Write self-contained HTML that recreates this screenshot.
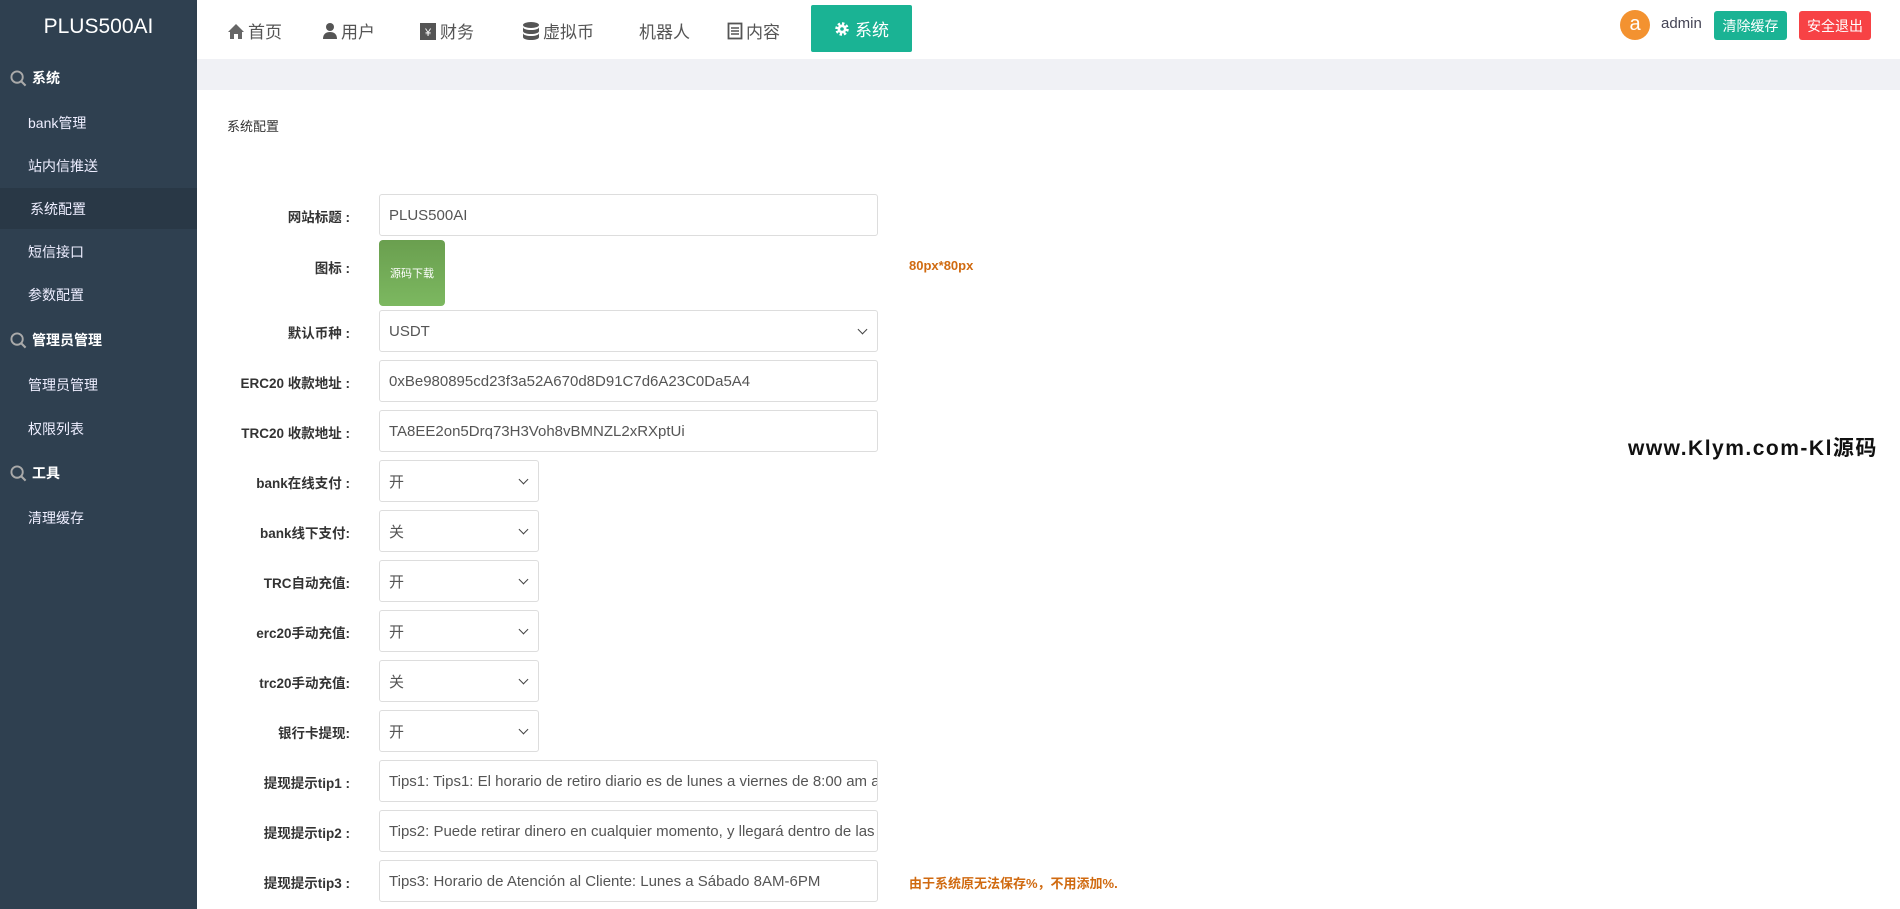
<!DOCTYPE html>
<html><head><meta charset="utf-8"><style>
*{margin:0;padding:0;box-sizing:border-box}
body{width:1900px;height:909px;overflow:hidden;background:#fff;font-family:"Liberation Sans","Noto Sans CJK SC",sans-serif;position:relative}
.side{position:absolute;left:0;top:0;width:197px;height:909px;background:#2f4050;color:#fff}
.logo{position:absolute;left:0;width:197px;top:15px;text-align:center;font-size:21px;color:#fff}
.sh{position:absolute;left:10px;font-size:14px;font-weight:bold;display:flex;align-items:center;gap:5px}
.si{position:absolute;left:28px;font-size:14px;color:#eef}
.act{position:absolute;left:0;top:188px;width:197px;height:41px;background:#293846}
.top{position:absolute;left:197px;top:0;right:0;height:59px;background:#fff;box-shadow:0 2px 4px rgba(0,0,0,.08)}
.gray{position:absolute;left:197px;top:59px;right:0;height:31px;background:#f0f1f5}
.nav{position:absolute;top:18px;font-size:17px;color:#555;display:flex;align-items:center;gap:3px}
.sys{position:absolute;left:811px;top:5px;width:101px;height:47px;background:#1ab394;border-radius:2px;color:#fff;font-size:17px;display:flex;align-items:center;justify-content:center;gap:5px}
.btn{position:absolute;top:11px;height:29px;border-radius:3px;color:#fff;font-size:14px;display:flex;align-items:center;justify-content:center}
.lbl{position:absolute;right:1550px;font-size:13.5px;font-weight:bold;color:#333;text-align:right;white-space:nowrap}
.in{position:absolute;left:379px;width:499px;height:42px;border:1px solid #ddd;border-radius:3px;font-size:15px;color:#555;padding-left:9px;display:flex;align-items:center;white-space:nowrap;overflow:hidden}
.sm{width:160px}
.sel::after{content:"";position:absolute;right:11px;top:15px;width:6px;height:6px;border-right:1.6px solid #444;border-bottom:1.6px solid #444;transform:rotate(45deg)}
.note{position:absolute;left:909px;font-size:13px;font-weight:bold;color:#d06a10}
</style></head><body>
<div class="side">
<div class="logo">PLUS500AI</div>
<div class="act"></div>
<svg width="0" height="0" style="position:absolute"><symbol id="mg" viewBox="0 0 18 18"><circle cx="7.5" cy="7.5" r="6" fill="none" stroke="#aaa" stroke-width="2"/><path d="M12 12l4.5 4.5" stroke="#aaa" stroke-width="2.2"/></symbol></svg>
<div class="sh" style="top:68px"><svg width="17" height="17"><use href="#mg"/></svg>系统</div>
<div class="si" style="top:113px">bank管理</div>
<div class="si" style="top:156px">站内信推送</div>
<div class="si" style="top:199px;left:30px">系统配置</div>
<div class="si" style="top:242px">短信接口</div>
<div class="si" style="top:285px">参数配置</div>
<div class="sh" style="top:330px"><svg width="17" height="17"><use href="#mg"/></svg>管理员管理</div>
<div class="si" style="top:375px">管理员管理</div>
<div class="si" style="top:419px">权限列表</div>
<div class="sh" style="top:463px"><svg width="17" height="17"><use href="#mg"/></svg>工具</div>
<div class="si" style="top:508px">清理缓存</div>
</div>
<div class="top"></div>
<div class="gray"></div>
<div class="nav" style="left:227px"><svg width="18" height="18" viewBox="0 0 18 18"><path d="M9 2L1 10h2v7h4v-5h4v5h4v-7h2z" fill="#666"/></svg>首页</div>
<div class="nav" style="left:322px"><svg width="16" height="18" viewBox="0 0 16 18"><circle cx="8" cy="5" r="4" fill="#555"/><path d="M1 17c0-5 3-7 7-7s7 2 7 7z" fill="#555"/></svg>用户</div>
<div class="nav" style="left:419px"><svg width="18" height="20" viewBox="0 0 18 20"><rect x="1" y="2" width="16" height="17" fill="#555"/><text x="9" y="15" font-size="11" fill="#fff" text-anchor="middle">¥</text></svg>财务</div>
<div class="nav" style="left:522px"><svg width="18" height="20" viewBox="0 0 18 20"><ellipse cx="9" cy="4" rx="8" ry="3" fill="#555"/><path d="M1 6c0 4 16 4 16 0v4c0 4-16 4-16 0zM1 12c0 4 16 4 16 0v4c0 4-16 4-16 0z" fill="#555"/></svg>虚拟币</div>
<div class="nav" style="left:639px">机器人</div>
<div class="nav" style="left:727px"><svg width="16" height="18" viewBox="0 0 16 18"><rect x="1.5" y="1.5" width="13" height="15" fill="none" stroke="#555" stroke-width="1.8"/><path d="M4 6h8M4 9h8M4 12h8" stroke="#555" stroke-width="1.5"/></svg>内容</div>
<div class="sys"><svg width="16" height="16" viewBox="0 0 16 16"><circle cx="8" cy="8" r="5" fill="none" stroke="#fff" stroke-width="3.5" stroke-dasharray="2.2 1.7"/><circle cx="8" cy="8" r="4.5" fill="#fff"/><circle cx="8" cy="8" r="1.8" fill="#1ab394"/></svg>系统</div>
<div style="position:absolute;left:1620px;top:10px;width:30px;height:30px;border-radius:50%;background:#f39230;color:#fff;font-size:20px;text-align:center;line-height:28px">a</div>
<div style="position:absolute;left:1661px;top:15px;font-size:15px;color:#445">admin</div>
<div class="btn" style="left:1714px;width:73px;background:#1ab394">清除缓存</div>
<div class="btn" style="left:1799px;width:72px;background:#f74245">安全退出</div>
<div style="position:absolute;left:227px;top:116px;font-size:13px;color:#333">系统配置</div>

<div class="lbl" style="top:206px">网站标题 :</div><div class="in" style="top:194px">PLUS500AI</div>
<div class="lbl" style="top:257px">图标 :</div>
<div style="position:absolute;left:379px;top:240px;width:66px;height:66px;border-radius:4px;background:linear-gradient(#6a9f4f,#7cb860);color:#fff;font-size:11px;display:flex;align-items:center;justify-content:center">源码下载</div>
<div class="note" style="top:258px">80px*80px</div>
<div class="lbl" style="top:322px">默认币种 :</div><div class="in sel" style="top:310px">USDT</div>
<div class="lbl" style="top:372px">ERC20 收款地址 :</div><div class="in" style="top:360px">0xBe980895cd23f3a52A670d8D91C7d6A23C0Da5A4</div>
<div class="lbl" style="top:422px">TRC20 收款地址 :</div><div class="in" style="top:410px">TA8EE2on5Drq73H3Voh8vBMNZL2xRXptUi</div>
<div class="lbl" style="top:472px">bank在线支付 :</div><div class="in sm sel" style="top:460px">开</div>
<div class="lbl" style="top:522px">bank线下支付:</div><div class="in sm sel" style="top:510px">关</div>
<div class="lbl" style="top:572px">TRC自动充值:</div><div class="in sm sel" style="top:560px">开</div>
<div class="lbl" style="top:622px">erc20手动充值:</div><div class="in sm sel" style="top:610px">开</div>
<div class="lbl" style="top:672px">trc20手动充值:</div><div class="in sm sel" style="top:660px">关</div>
<div class="lbl" style="top:722px">银行卡提现:</div><div class="in sm sel" style="top:710px">开</div>
<div class="lbl" style="top:772px">提现提示tip1 :</div><div class="in" style="top:760px">Tips1: Tips1: El horario de retiro diario es de lunes a viernes de 8:00 am a 6:00 pm</div>
<div class="lbl" style="top:822px">提现提示tip2 :</div><div class="in" style="top:810px">Tips2: Puede retirar dinero en cualquier momento, y llegará dentro de las 24 horas</div>
<div class="lbl" style="top:872px">提现提示tip3 :</div><div class="in" style="top:860px">Tips3: Horario de Atención al Cliente: Lunes a Sábado 8AM-6PM</div>
<div class="note" style="top:873px">由于系统原无法保存%，不用添加%.</div>
<div style="position:absolute;left:1628px;top:432px;font-size:21px;font-weight:bold;color:#111;letter-spacing:1.5px">www.Klym.com-Kl源码</div>
</body></html>
